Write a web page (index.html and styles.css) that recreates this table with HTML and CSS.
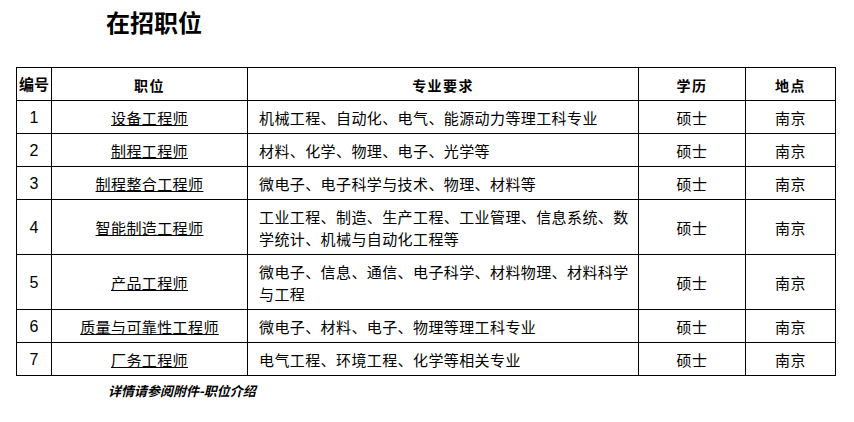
FILE: index.html
```html
<!DOCTYPE html>
<html lang="zh-CN">
<head>
<meta charset="utf-8">
<title>在招职位</title>
<link rel="stylesheet" href="styles.css">
</head>
<body>
<div class="page">
  <h1 class="title">在招职位</h1>
  <table class="jobs">
    <colgroup>
      <col class="c-no">
      <col class="c-pos">
      <col class="c-req">
      <col class="c-edu">
      <col class="c-loc">
    </colgroup>
    <thead>
      <tr>
        <th class="no-head">编号</th>
        <th>职位</th>
        <th>专业要求</th>
        <th>学历</th>
        <th>地点</th>
      </tr>
    </thead>
    <tbody>
      <tr><td class="num">1</td><td class="pos"><a href="#">设备工程师</a></td><td class="req">机械工程、自动化、电气、能源动力等理工科专业</td><td class="ctr">硕士</td><td class="ctr">南京</td></tr>
      <tr><td class="num">2</td><td class="pos"><a href="#">制程工程师</a></td><td class="req">材料、化学、物理、电子、光学等</td><td class="ctr">硕士</td><td class="ctr">南京</td></tr>
      <tr><td class="num">3</td><td class="pos"><a href="#">制程整合工程师</a></td><td class="req">微电子、电子科学与技术、物理、材料等</td><td class="ctr">硕士</td><td class="ctr">南京</td></tr>
      <tr><td class="num">4</td><td class="pos"><a href="#">智能制造工程师</a></td><td class="req">工业工程、制造、生产工程、工业管理、信息系统、数学统计、机械与自动化工程等</td><td class="ctr">硕士</td><td class="ctr">南京</td></tr>
      <tr><td class="num">5</td><td class="pos"><a href="#">产品工程师</a></td><td class="req">微电子、信息、通信、电子科学、材料物理、材料科学与工程</td><td class="ctr">硕士</td><td class="ctr">南京</td></tr>
      <tr><td class="num">6</td><td class="pos"><a href="#">质量与可靠性工程师</a></td><td class="req">微电子、材料、电子、物理等理工科专业</td><td class="ctr">硕士</td><td class="ctr">南京</td></tr>
      <tr><td class="num">7</td><td class="pos"><a href="#">厂务工程师</a></td><td class="req">电气工程、环境工程、化学等相关专业</td><td class="ctr">硕士</td><td class="ctr">南京</td></tr>
    </tbody>
  </table>
  <p class="note">详情请参阅附件-职位介绍</p>
</div>
</body>
</html>
```
FILE: styles.css
```css
html, body {
  margin: 0;
  padding: 0;
  background: #fff;
  color: #000;
  font-family: "Noto Sans CJK SC", "Liberation Sans", sans-serif;
}

.page {
  padding: 0 0 0 16px;
}

.title {
  margin: 0;
  padding: 6px 0 0 90px;
  height: 67px;
  box-sizing: border-box;
  font-size: 24px;
  line-height: 32px;
  font-weight: bold;
}

.jobs {
  border-collapse: collapse;
  table-layout: fixed;
  width: 819px;
  font-size: 15px;
  letter-spacing: 0.4px;
}

.c-no { width: 35px; }
.c-pos { width: 196px; }
.c-req { width: 391px; }
.c-edu { width: 107px; }
.c-loc { width: 90px; }

.jobs th,
.jobs td {
  border: 1px solid #000;
  padding: 6px 4px 4px;
  height: 22px;
  line-height: 22px;
  vertical-align: middle;
}

.jobs th {
  font-size: 14px;
  letter-spacing: 1.4px;
  font-weight: bold;
  text-align: center;
}

.jobs th.no-head {
  padding: 5px 0;
  letter-spacing: 0;
  font-size: 15px;
}

.jobs td.num {
  text-align: center;
  font-family: "Liberation Sans", sans-serif;
  font-size: 16px;
  letter-spacing: 0;
  padding: 6px 0 4px;
}

.jobs td.pos,
.jobs td.ctr {
  text-align: center;
}

.jobs td.pos a {
  color: #000;
  text-decoration: underline;
}

.jobs td.req {
  text-align: left;
  padding: 6px 6px 4px 11px;
}

.note {
  margin: 0;
  padding: 6px 0 0 92px;
  font-size: 13px;
  line-height: 18px;
  font-weight: bold;
  font-style: italic;
}
```
